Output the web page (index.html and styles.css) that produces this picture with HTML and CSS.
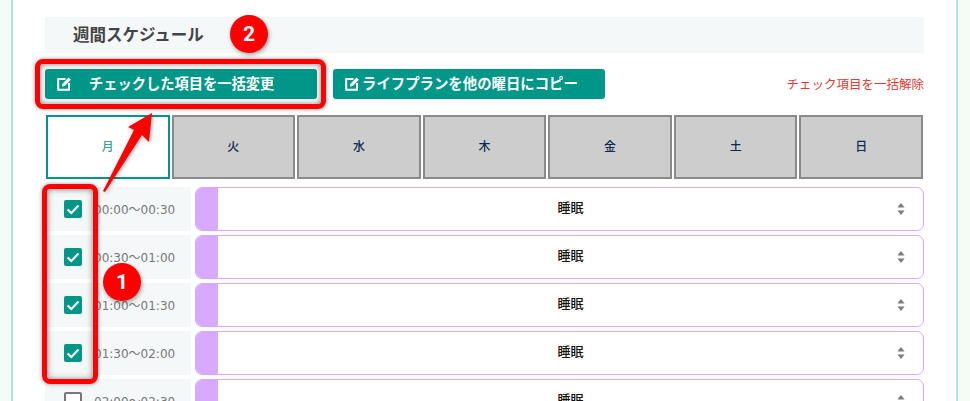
FILE: index.html
```html
<!DOCTYPE html>
<html lang="ja">
<head>
<meta charset="utf-8">
<title>週間スケジュール</title>
<link rel="stylesheet" href="styles.css">
</head>
<body>
<div class="page">
  <main class="panel">
    <h2 class="heading">週間スケジュール</h2>
    <div class="actions">
      <button class="btn btn-wide"><svg class="edit" viewBox="0 0 14 14"><path d="M8.5 2H1.2v10.8H12V6" fill="none" stroke="#fff" stroke-width="2"/><path d="M5 9.5l.5-2.8L11.6.6l2.2 2.2-6 6.1z" fill="#fff"/></svg><span>チェックした項目を一括変更</span></button>
      <button class="btn btn-copy"><svg class="edit" viewBox="0 0 14 14"><path d="M8.5 2H1.2v10.8H12V6" fill="none" stroke="#fff" stroke-width="2"/><path d="M5 9.5l.5-2.8L11.6.6l2.2 2.2-6 6.1z" fill="#fff"/></svg><span>ライフプランを他の曜日にコピー</span></button>
      <a class="clear">チェック項目を一括解除</a>
    </div>
    <div class="tabs">
      <div class="tab active">月</div>
      <div class="tab">火</div>
      <div class="tab">水</div>
      <div class="tab">木</div>
      <div class="tab">金</div>
      <div class="tab">土</div>
      <div class="tab">日</div>
    </div>
    <div class="rows">
      <div class="row">
        <div class="time"><span class="check on"><svg viewBox="0 0 18 18"><path d="M3.5 9.5l3.8 3.4 7.2-7.4" fill="none" stroke="#fff" stroke-width="2.2"/></svg></span><span class="label">00:00～00:30</span></div>
        <div class="select"><i class="swatch"></i><span class="value">睡眠</span><svg class="updown" viewBox="0 0 8 12"><path d="M4 0l3.6 4.6H.4zM4 12L.4 7.4h7.2z" fill="#7d7d7d"/></svg></div>
      </div>
      <div class="row">
        <div class="time"><span class="check on"><svg viewBox="0 0 18 18"><path d="M3.5 9.5l3.8 3.4 7.2-7.4" fill="none" stroke="#fff" stroke-width="2.2"/></svg></span><span class="label">00:30～01:00</span></div>
        <div class="select"><i class="swatch"></i><span class="value">睡眠</span><svg class="updown" viewBox="0 0 8 12"><path d="M4 0l3.6 4.6H.4zM4 12L.4 7.4h7.2z" fill="#7d7d7d"/></svg></div>
      </div>
      <div class="row">
        <div class="time"><span class="check on"><svg viewBox="0 0 18 18"><path d="M3.5 9.5l3.8 3.4 7.2-7.4" fill="none" stroke="#fff" stroke-width="2.2"/></svg></span><span class="label">01:00～01:30</span></div>
        <div class="select"><i class="swatch"></i><span class="value">睡眠</span><svg class="updown" viewBox="0 0 8 12"><path d="M4 0l3.6 4.6H.4zM4 12L.4 7.4h7.2z" fill="#7d7d7d"/></svg></div>
      </div>
      <div class="row">
        <div class="time"><span class="check on"><svg viewBox="0 0 18 18"><path d="M3.5 9.5l3.8 3.4 7.2-7.4" fill="none" stroke="#fff" stroke-width="2.2"/></svg></span><span class="label">01:30～02:00</span></div>
        <div class="select"><i class="swatch"></i><span class="value">睡眠</span><svg class="updown" viewBox="0 0 8 12"><path d="M4 0l3.6 4.6H.4zM4 12L.4 7.4h7.2z" fill="#7d7d7d"/></svg></div>
      </div>
      <div class="row">
        <div class="time"><span class="check"></span><span class="label">02:00～02:30</span></div>
        <div class="select"><i class="swatch"></i><span class="value">睡眠</span><svg class="updown" viewBox="0 0 8 12"><path d="M4 0l3.6 4.6H.4zM4 12L.4 7.4h7.2z" fill="#7d7d7d"/></svg></div>
      </div>
    </div>
  </main>
  <div class="mark mark-btn"></div>
  <div class="mark mark-checks"></div>
  <svg class="arrow" viewBox="0 0 52 80"><path d="M1 79L32 18 26 15 50 1 47 30 40 23 3 80z" fill="#f00"/></svg>
  <div class="badge badge-1">1</div>
  <div class="badge badge-2">2</div>
</div>
</body>
</html>
```
FILE: styles.css
```css
* { box-sizing: border-box; }
html, body { margin: 0; height: 401px; overflow: hidden; }
body { background: #f5fcf5; font-family: "Noto Sans CJK JP", "Liberation Sans", sans-serif; }
.page { position: relative; width: 970px; height: 401px; overflow: hidden; padding: 0 11px; }
.panel { width: 947px; height: 460px; background: #fff; border-left: 2px solid #b2e5df; border-right: 2px solid #b2e5df; padding: 17px 32px 0; }
.heading { margin: 0; height: 36px; background: #f4f8f9; padding-left: 28px; font-size: 16.5px; font-weight: 700; line-height: 34px; color: #444; }
.actions { display: flex; align-items: center; height: 30px; margin-top: 16px; gap: 16px; }
.btn { display: flex; align-items: center; height: 30px; width: 272px; border: 0; border-radius: 3px; background: #009688; color: #fff; font-family: inherit; font-size: 14.25px; font-weight: 700; padding: 0 0 3px 12px; white-space: nowrap; }
.btn-wide span { margin-left: 18px; }
.btn-copy span { margin-left: 3px; font-size: 14.4px; }
.edit { width: 14px; height: 14px; flex: none; margin-top: 3px; }
.clear { margin-left: auto; font-size: 12.5px; color: #e53935; white-space: nowrap; padding-bottom: 2px; }
.tabs { display: grid; grid-template-columns: repeat(7, 1fr); gap: 2px; margin: 16px 0 0 1px; width: 877px; height: 64px; }
.tab { display: flex; align-items: center; justify-content: center; background: #cdcdcd; border: 2px solid #8a8a8a; color: #0d2a4a; font-size: 12px; font-weight: 500; padding-bottom: 3px; }
.tab.active { background: #fff; border-color: #009688; color: #3f9f95; }
.rows { display: flex; flex-direction: column; gap: 4px; margin-top: 8px; }
.row { display: flex; gap: 4px; height: 44px; }
.time { width: 146px; background: #f4f8f9; display: flex; align-items: center; padding-left: 19px; gap: 12px; flex: none; }
.check { width: 18px; height: 18px; border: 2px solid #777; border-radius: 2px; flex: none; background: #fff; display: block; }
.check.on { background: #009688; border: 0; }
.check svg { display: block; width: 18px; height: 18px; }
.label { font-size: 12px; color: #777; font-family: "DejaVu Sans", "Noto Sans CJK JP", sans-serif; white-space: nowrap; margin-top: -2px; }
.select { position: relative; flex: 1; display: flex; align-items: center; border: 1px solid #d8aaff; border-radius: 7px; overflow: hidden; background: #fff; }
.swatch { width: 22px; height: 100%; background: #d8aaff; flex: none; }
.value { flex: 1; text-align: center; font-size: 13px; font-weight: 500; color: #111; padding-bottom: 5px; }
.updown { position: absolute; right: 18px; top: 15px; width: 8px; height: 12px; }
.mark { position: absolute; border: 5px solid #f00; border-radius: 8px; box-shadow: 0 0 4px rgba(0,0,0,.4), inset 0 0 6px rgba(0,0,0,.5); }
.mark-btn { left: 35px; top: 59px; width: 291px; height: 50px; }
.mark-checks { left: 42px; top: 184px; width: 56px; height: 200px; }
.arrow { position: absolute; left: 102px; top: 112px; width: 52px; height: 80px; filter: drop-shadow(1px 1px 2px rgba(0,0,0,.3)); }
.badge { position: absolute; width: 38px; height: 38px; border-radius: 50%; background: #f00; color: #fff; font-family: "Roboto", sans-serif; font-weight: 700; font-size: 21px; line-height: 38px; text-align: center; box-shadow: 1px 2px 4px rgba(0,0,0,.35); }
.badge-1 { left: 103px; top: 263px; }
.badge-2 { left: 230px; top: 15px; }
```
